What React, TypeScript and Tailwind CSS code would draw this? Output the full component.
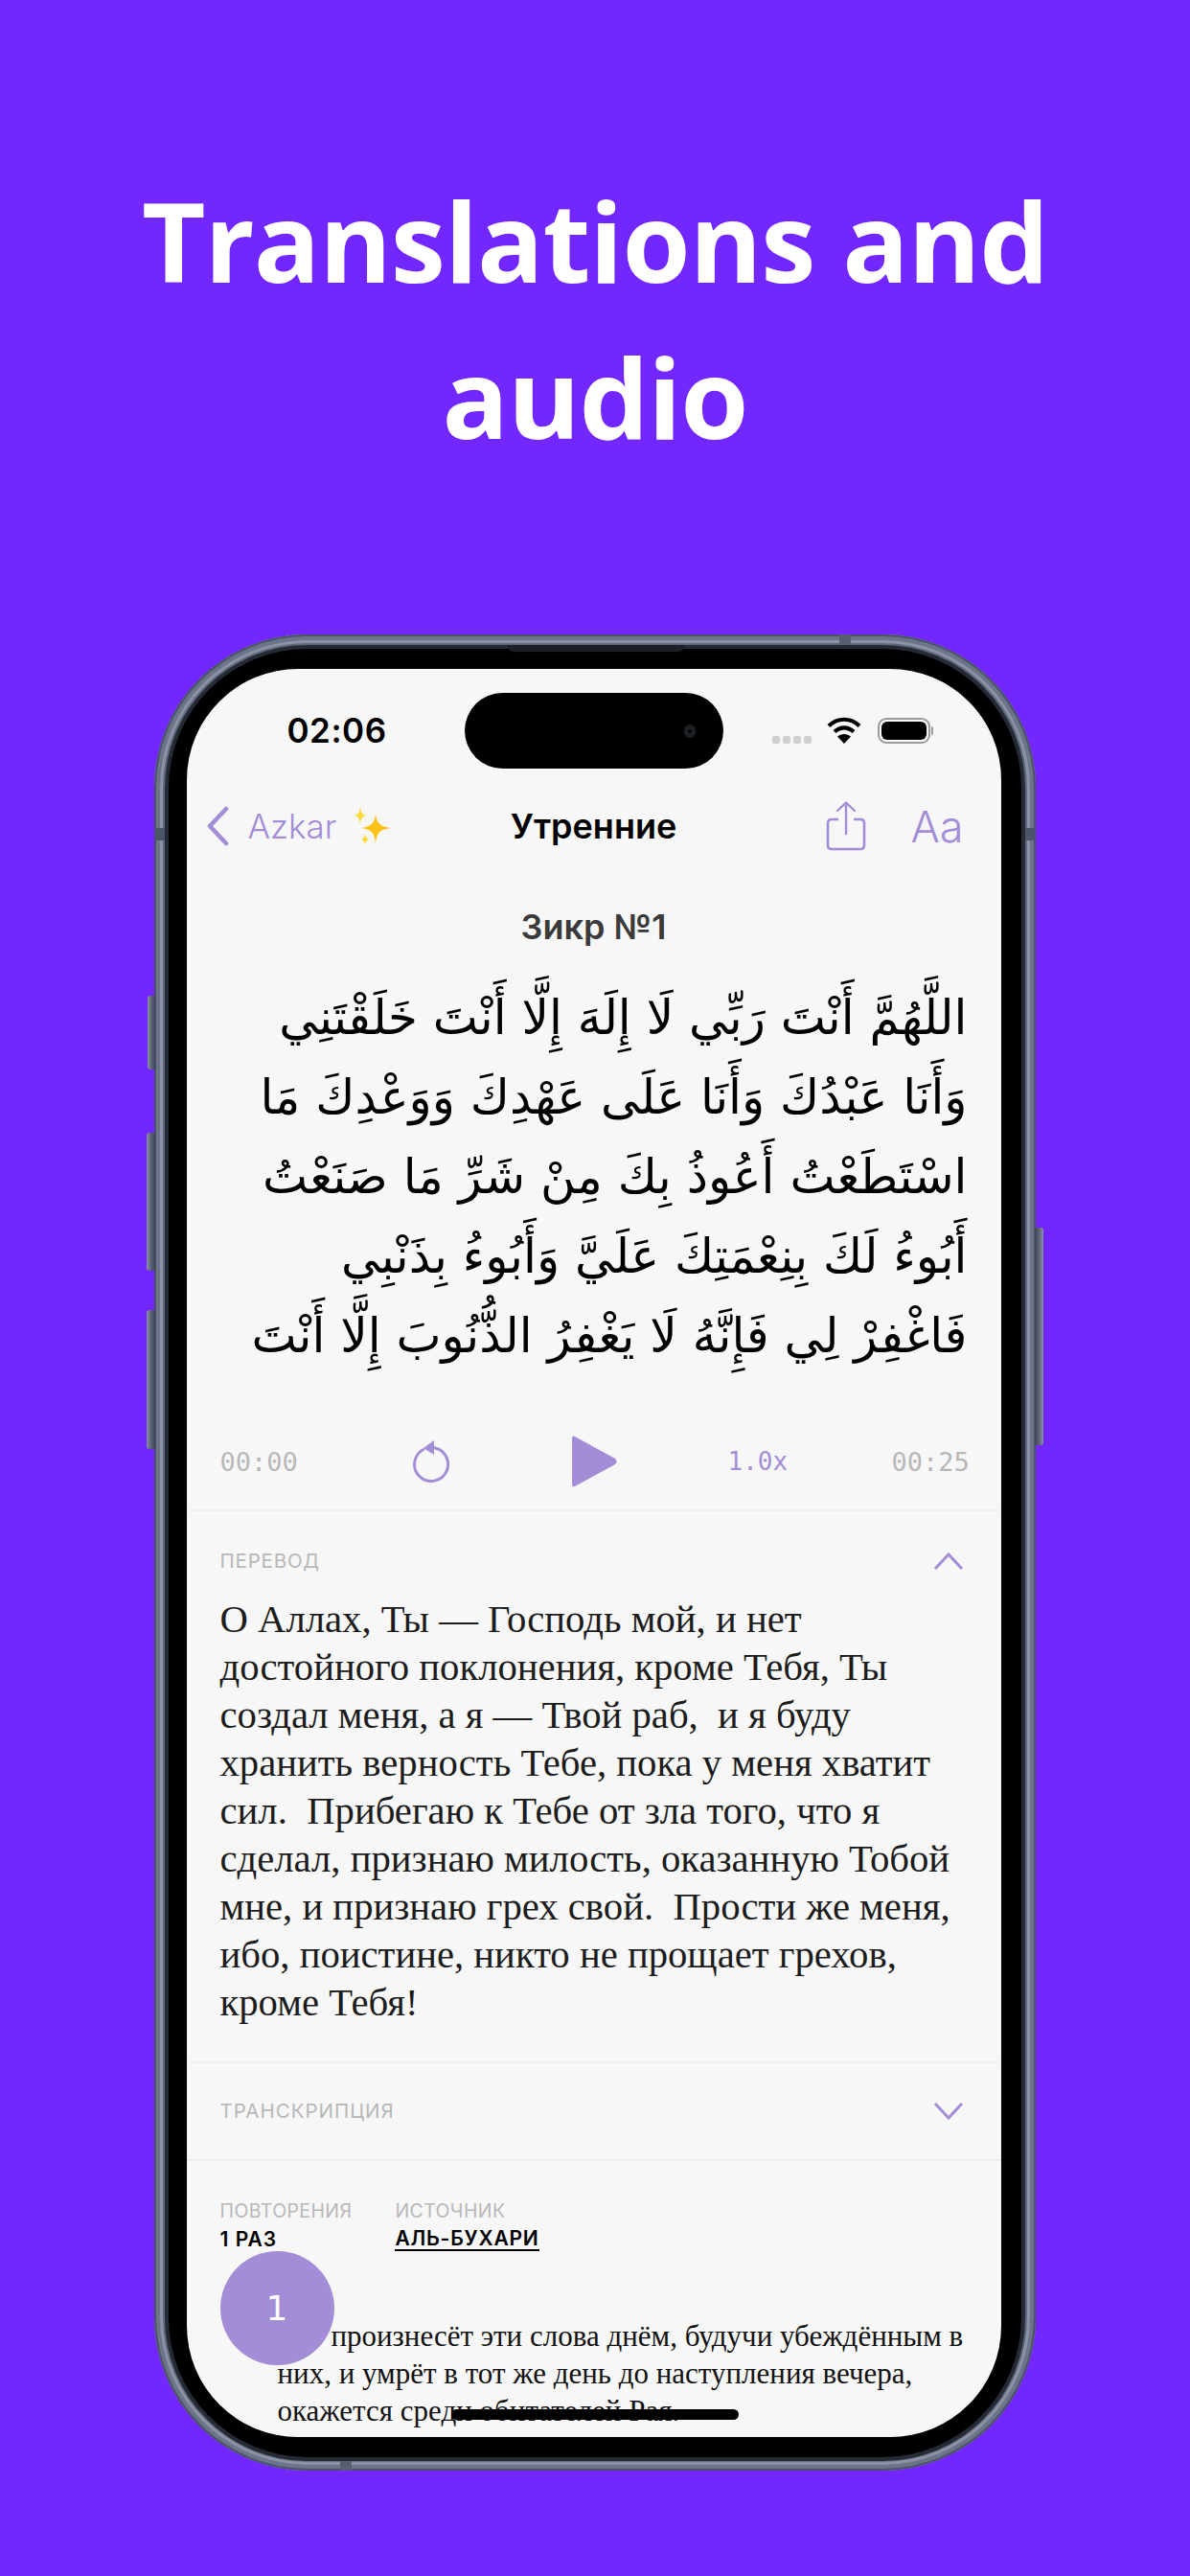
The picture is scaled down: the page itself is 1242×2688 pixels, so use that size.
import React from "react";

const arabic = [
  "اللَّهُمَّ أَنْتَ رَبِّي لَا إِلَهَ إِلَّا أَنْتَ خَلَقْتَنِي",
  "وَأَنَا عَبْدُكَ وَأَنَا عَلَى عَهْدِكَ وَوَعْدِكَ مَا",
  "اسْتَطَعْتُ أَعُوذُ بِكَ مِنْ شَرِّ مَا صَنَعْتُ",
  "أَبُوءُ لَكَ بِنِعْمَتِكَ عَلَيَّ وَأَبُوءُ بِذَنْبِي",
  "فَاغْفِرْ لِي فَإِنَّهُ لَا يَغْفِرُ الذُّنُوبَ إِلَّا أَنْتَ",
];

const translation = [
  "О Аллах, Ты — Господь мой, и нет",
  "достойного поклонения, кроме Тебя, Ты",
  "создал меня, а я — Твой раб,  и я буду",
  "хранить верность Тебе, пока у меня хватит",
  "сил.  Прибегаю к Тебе от зла того, что я",
  "сделал, признаю милость, оказанную Тобой",
  "мне, и признаю грех свой.  Прости же меня,",
  "ибо, поистине, никто не прощает грехов,",
  "кроме Тебя!",
];

function SideButton({ className }: { className: string }) {
  return (
    <div
      className={`absolute bg-gradient-to-r from-[#8c93a3] via-[#5b6376] to-[#3c4353] ${className}`}
    />
  );
}

function Sparkles() {
  return (
    <svg width="42" height="40" viewBox="0 0 42 40" className="ml-[17px]">
      <path d="M24 7 C25 17 28 20 40 22 C28 24 25 27 24 39 C23 27 20 24 9 22 C20 20 23 17 24 7Z" fill="#fcc21b" />
      <path d="M8 0 C8.6 6 10 8 14 9 C10 10 8.6 12 8 18 C7.4 12 6 10 2 9 C6 8 7.4 6 8 0Z" fill="#fdd835" />
      <path d="M13 28 C13.4 31 14.5 33 17 34 C14.5 35 13.4 36 13 40 C12.6 36 11.5 35 9 34 C11.5 33 12.6 31 13 28Z" fill="#fdd835" />
    </svg>
  );
}

export default function App() {
  return (
    <div className="w-[1242px] h-[2688px] bg-[#7327ff] overflow-hidden flex flex-col items-center pt-[169px]">
      <h1 className="text-white text-center font-bold text-[115px] leading-[163px] whitespace-nowrap font-['Open_Sans','Noto_Sans',sans-serif] tracking-[-1px]">
        Translations and
        <br />
        audio
      </h1>

      <div className="relative mt-[167px] ml-[-1px] w-[920px] h-[1916px] shrink-0">
        <SideButton className="left-[-7px] top-[377px] w-[8px] h-[77px] rounded-l-[3px]" />
        <SideButton className="left-[-8px] top-[520px] w-[9px] h-[144px] rounded-l-[3px]" />
        <SideButton className="left-[-8px] top-[705px] w-[9px] h-[145px] rounded-l-[3px]" />
        <SideButton className="right-[-8px] top-[619px] w-[9px] h-[227px] rotate-180 rounded-l-[3px]" />

        <div className="h-full rounded-[160px] bg-[#5f687c] pt-[11px] pl-[11px] pr-[11px] pb-[10px] shadow-[inset_0_0_0_2px_#4a5366,inset_0_0_0_6px_#6b7488,inset_0_0_0_9px_#8a92a3]">
          <div className="relative h-full rounded-[149px] bg-[#262a34] p-[4px]">
            <div className="absolute top-0 left-[358px] w-[184px] h-[7px] rounded-b-[6px] bg-[#1d2026]" />
            <div className="h-full rounded-[145px] bg-black pt-[21px] pb-[21px] pl-[19px] pr-[21px]">
              <div className="relative h-full rounded-[116px] overflow-hidden bg-[#f7f7f7] flex flex-col font-['Inter',sans-serif]">
                {/* Dynamic island */}
                <div className="absolute top-[25px] left-[290px] w-[270px] h-[79px] rounded-[40px] bg-black flex items-center justify-end pr-[29px]">
                  <div className="w-[12px] h-[14px] rounded-full bg-[#1c1f24] flex items-center justify-center">
                    <div className="w-[4px] h-[4px] rounded-full bg-[#07080a]" />
                  </div>
                </div>

                {/* Status bar */}
                <div className="h-[128px] shrink-0 flex items-center pl-[105px] pr-[71px]">
                  <span className="text-[35px] font-semibold text-black tracking-[0.5px] leading-none">02:06</span>
                  <div className="ml-auto flex items-center">
                    <div className="flex gap-[3px] mt-[20px]">
                      <div className="w-[8px] h-[8px] rounded-[2px] bg-[#cfcfcf]" />
                      <div className="w-[8px] h-[8px] rounded-[2px] bg-[#cfcfcf]" />
                      <div className="w-[8px] h-[8px] rounded-[2px] bg-[#cfcfcf]" />
                      <div className="w-[8px] h-[8px] rounded-[2px] bg-[#cfcfcf]" />
                    </div>
                    <svg width="36" height="28" viewBox="0 0 36 28" className="ml-[16px]">
                      <path d="M2 9.5 C11 0.5 25 0.5 34 9.5" fill="none" stroke="#000" strokeWidth="4.2" />
                      <path d="M8 15.5 C14 10 22 10 28 15.5" fill="none" stroke="#000" strokeWidth="4.2" />
                      <path d="M18 28 L11 20.5 C15 17 21 17 25 20.5 Z" fill="#000" />
                    </svg>
                    <div className="ml-[17px] flex items-center">
                      <div className="w-[55px] h-[27px] rounded-[9px] border-2 border-[#9b9b9b] p-[2px]">
                        <div className="w-full h-full rounded-[6px] bg-black" />
                      </div>
                      <div className="ml-[1px] w-[2px] h-[9px] rounded-r-[2px] bg-[#9b9b9b]" />
                    </div>
                  </div>
                </div>

                {/* Nav bar */}
                <div className="h-[72px] shrink-0 grid grid-cols-[1fr_auto_1fr] items-center px-[19px]">
                  <div className="flex items-center">
                    <svg width="26" height="42" viewBox="0 0 26 42">
                      <path d="M22 3 L5 21 L22 39" fill="none" stroke="#a38dd6" strokeWidth="4.5" strokeLinecap="round" strokeLinejoin="round" />
                    </svg>
                    <span className="ml-[19px] text-[#a38dd6] text-[35px] font-light leading-none">Azkar</span>
                    <Sparkles />
                  </div>
                  <span className="text-black text-[36px] font-semibold leading-none">Утренние</span>
                  <div className="flex items-center justify-end pr-[20px]">
                    <svg width="42" height="52" viewBox="0 0 42 52">
                      <path d="M13 19 H6 Q2 19 2 23 V46 Q2 50 6 50 H36 Q40 50 40 46 V23 Q40 19 36 19 H29" fill="none" stroke="#a38dd6" strokeWidth="2.6" />
                      <path d="M21 34 V2 M12 10 L21 1.5 L30 10" fill="none" stroke="#a38dd6" strokeWidth="2.4" strokeLinecap="round" strokeLinejoin="round" />
                    </svg>
                    <span className="ml-[46px] text-[#a38dd6] text-[45px] font-light leading-none">Aa</span>
                  </div>
                </div>

                {/* Heading */}
                <div className="mt-[49px] h-[40px] shrink-0 flex items-center justify-center text-[#3a3a3a] text-[36px] font-semibold leading-none">
                  Зикр №1
                </div>

                {/* Arabic */}
                <div
                  dir="rtl"
                  className="mt-[34px] pr-[35px] shrink-0 flex flex-col items-start text-black text-[50px] leading-[83px] whitespace-nowrap font-['DejaVu_Sans',sans-serif]"
                >
                  {arabic.map((l) => (
                    <div key={l}>{l}</div>
                  ))}
                </div>

                {/* Player */}
                <div className="mt-[54px] h-[70px] shrink-0 flex items-center pl-[35px] font-['DejaVu_Sans_Mono',monospace] text-[27px] font-extralight leading-none">
                  <span className="w-[79px] text-[#b8b8b8]">00:00</span>
                  <svg width="40" height="44" viewBox="0 0 40 44" className="ml-[120px]">
                    <path d="M14 9 A17.5 17.5 0 1 0 21 7.5" fill="none" stroke="#a38dd6" strokeWidth="3" />
                    <path d="M24 0 L24 15 L13 8 Z" fill="#a38dd6" />
                  </svg>
                  <svg width="50" height="56" viewBox="0 0 50 56" className="ml-[127px]">
                    <path d="M4 2 Q1.5 0.5 1 4 V52 Q1.5 55.5 4 54 L46 31 Q49 28 46 25 Z" fill="#a38dd6" />
                  </svg>
                  <span className="ml-[114px] w-[62px] text-[#a38dd6] text-[26px]">1.0x</span>
                  <span className="ml-[109px] w-[79px] text-[#b8b8b8]">00:25</span>
                </div>

                {/* Translation */}
                <div className="mt-[15px] border-t-2 border-[#efeef5] shrink-0 pl-[35px] pr-[39px]">
                  <div className="h-[104px] flex items-center justify-between">
                    <span className="text-[#b8b8b8] text-[20.5px] tracking-[0.8px] leading-none">ПЕРЕВОД</span>
                    <svg width="32" height="20" viewBox="0 0 32 20">
                      <path d="M2 18 L16 3 L30 18" fill="none" stroke="#a38dd6" strokeWidth="3" />
                    </svg>
                  </div>
                  <div className="mt-[-16px] text-[#1c1c1c] text-[40.7px] leading-[50px] whitespace-pre font-['Liberation_Serif',serif]">
                    {translation.map((l) => (
                      <div key={l}>{l}</div>
                    ))}
                  </div>
                </div>

                {/* Transcription */}
                <div className="mt-[36px] border-t-2 border-[#efeef5] shrink-0 h-[102px] pl-[35px] pr-[39px] flex items-center justify-between">
                  <span className="text-[#b8b8b8] text-[20.5px] tracking-[1px] leading-none">ТРАНСКРИПЦИЯ</span>
                  <svg width="32" height="20" viewBox="0 0 32 20">
                    <path d="M2 2 L16 17 L30 2" fill="none" stroke="#a38dd6" strokeWidth="3" />
                  </svg>
                </div>

                {/* Meta */}
                <div className="relative flex-1 border-t-2 border-[#efeef5] pl-[35px]">
                  <div className="mt-[40px] flex gap-[45px]">
                    <div className="flex flex-col">
                      <span className="text-[#b8b8b8] text-[19.5px] tracking-[0.4px] leading-[24px]">ПОВТОРЕНИЯ</span>
                      <span className="mt-[6px] text-black text-[21px] font-semibold tracking-[1px] leading-[24px]">1 РАЗ</span>
                    </div>
                    <div className="flex flex-col items-start">
                      <span className="text-[#b8b8b8] text-[19.5px] tracking-[0.4px] leading-[24px]">ИСТОЧНИК</span>
                      <span className="mt-[6px] text-black text-[21px] font-semibold tracking-[0.8px] leading-[22px] border-b-2 border-black">АЛЬ-БУХАРИ</span>
                    </div>
                  </div>
                  <div className="mt-[69px] ml-[60px] text-[#111] text-[31px] leading-[39px] whitespace-nowrap font-['Liberation_Serif',serif]">
                    <div>Кто произнесёт эти слова днём, будучи убеждённым в</div>
                    <div>них, и умрёт в тот же день до наступления вечера,</div>
                    <div>окажется среди обитателей Рая.</div>
                  </div>

                  {/* Counter */}
                  <div className="absolute left-[35px] top-[94px] w-[119px] h-[119px] rounded-full bg-[#a38dd6] flex items-center justify-center text-white text-[36px] leading-none font-['DejaVu_Sans',sans-serif]">
                    1
                  </div>
                </div>

                {/* Home indicator */}
                <div className="absolute left-[276px] bottom-[18px] w-[300px] h-[11px] rounded-full bg-black" />
              </div>
            </div>
          </div>
        </div>

        {/* Antenna bands */}
        <div className="absolute top-0 left-[715px] w-[12px] h-[11px] bg-[#565e70]" />
        <div className="absolute bottom-0 left-[194px] w-[12px] h-[10px] bg-[#565e70]" />
        <div className="absolute left-0 top-[202px] w-[11px] h-[13px] bg-[#4c5467]" />
        <div className="absolute right-0 top-[202px] w-[11px] h-[13px] bg-[#4c5467]" />
      </div>
    </div>
  );
}
